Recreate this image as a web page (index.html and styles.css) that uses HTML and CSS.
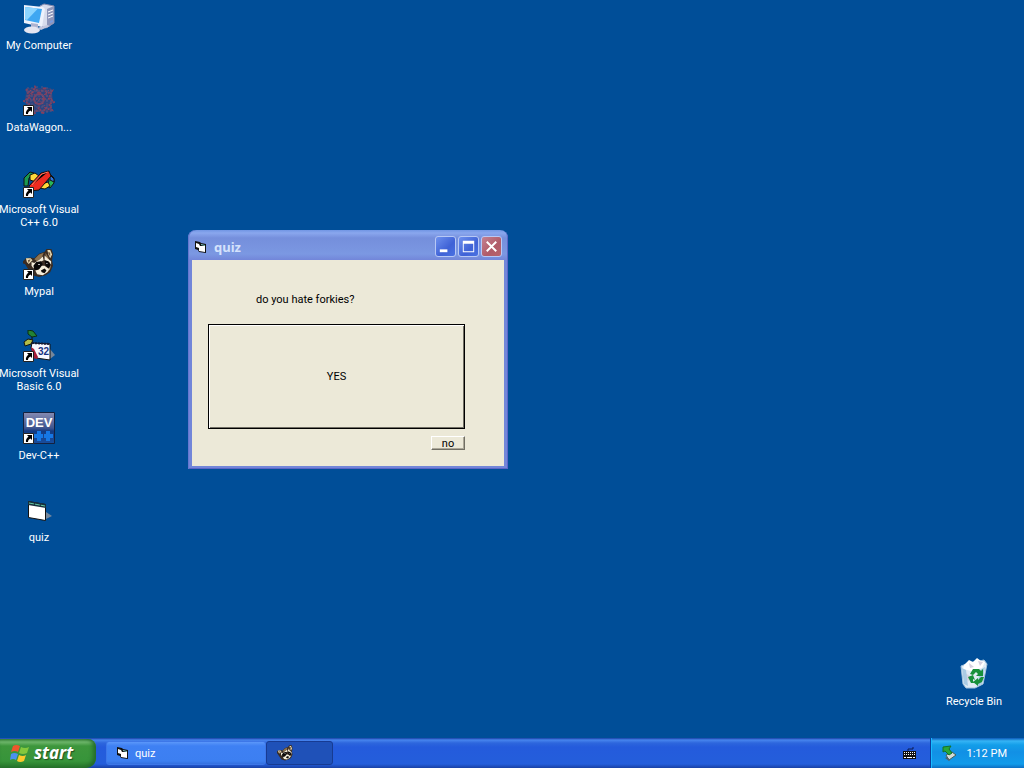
FILE: index.html
```html
<!DOCTYPE html>
<html lang="en">
<head>
    <meta charset="UTF-8">
    <meta name="viewport" content="width=device-width, initial-scale=1.0">
    <title>Desktop</title>
    <link rel="stylesheet" href="styles.css">
</head>
<body>
    <!-- Shapes used more than once -->
    <svg class="defs" width="0" height="0" aria-hidden="true">
        <symbol id="shortcut" viewBox="0 0 11 11">
            <path fill="#fff" stroke="#222" d="M.5 .5h10v10H.5z"/>
            <path fill="#000" d="M4 2h5v5L7.500 5.500C5.500 6.500 5 7.500 5 9H3C2.500 7 3.500 5 5.500 3.700z"/>
        </symbol>
        <symbol id="form" viewBox="0 0 16 16">
            <path fill="#111" d="M2 2l5 1 1 1 5 1v9l-7-1-1-2-3-1z"/>
            <path fill="#fff" d="M3 4l3 1 1 2h5v6l-6-1V9L3 8z"/>
            <path fill="#7fc6c0" d="M8 5l4 1v1L8 6z"/>
        </symbol>
        <symbol id="raccoon" viewBox="0 0 32 30">
            <path fill="#3a2c22" d="M2 10l5-1 4 1 5-5 6-2 2-3 5-1 2 6-1 7 1 6-3 7-5 3-7 2-7-2-5-7-3-5-4-1z"/>
            <path fill="#eadbb4" d="M2 10l5 0 2 2-4 4-2-2zM25 1l3 0 2 5-2 4-2-4z"/>
            <path fill="#6e573f" d="M4 12l3-1-2 4zM26 3l2 1v4l-2-3z"/>
            <path fill="#8e7350" d="M11 11l5-5 5-2-2 5-5 4zM23 4l3 5 1 4-4-3z"/>
            <path fill="#f6eedb" d="M8 14l3 1 6-4 3-3 1 4-4 2-5 3-2 4-2-3zM22 7l3 3 4 3 0 4-2-3-5-2z"/>
            <path fill="#0b0808" d="M10 18l3-4 5-1 2 3-2 5-4 2-3-1zM22 12l4 1 2 4-1 4-4-3z"/>
            <path fill="#f6eedb" d="M12 23l4-1 3-4 3 0 4 3 2 0-3 4-5 3-6-1z"/>
            <path fill="#0b0808" d="M18 23l4-2 2 2-2 3-3-1z"/>
            <path fill="#fff" d="M15 16h2v1h-2zM24 15h1v1h-1z"/>
            <path fill="#b6a17e" d="M29 17l-1 4-2 3 1-4z"/>
        </symbol>
    </svg>

    <main class="desktop">
        <nav class="icons">
            <a href="#" class="icon">
                <svg class="picture" viewBox="0 0 32 32">
                    <path fill="#d8dcec" stroke="#8389ad" d="M17 4l4-2 10 2v17l-8 5-6-2z"/>
                    <path fill="#8e96ba" d="M24 7l7-3v17l-7 5z"/>
                    <path stroke="#fff" d="M25 10l5-2M25 13l5-2M25 16l5-2"/>
                    <path fill="#7b9ce0" d="M27 19l3-1v2l-3 1z"/>
                    <path fill="#eef2fc" d="M1 3l19 2 2 2-3 18L1 21z"/>
                    <path fill="#3fa7f2" d="M2 5l17 2-3 14L2 18z"/>
                    <path fill="#8bd4ff" d="M2 5l13 1.500L4 18l-2-.5z"/>
                    <path fill="#aeb3d0" d="M8 21l7 1v4l-7-1z"/>
                    <ellipse cx="9" cy="28" rx="8" ry="3.500" fill="#e4e5f1"/>
                    <path fill="#c3c6dd" d="M14 26l10-3 3 1-9 4z"/>
                </svg>
                <span>My Computer</span>
            </a>
            <a href="#" class="icon">
                <svg class="picture" viewBox="0 0 32 32">
                    <path fill="#573e68" fill-opacity=".5" d="M4 4h24l2 10-2 14H5L2 14z"/>
                    <g fill="none" stroke="#83405f" stroke-width="2">
                        <circle cx="16" cy="15" r="5"/>
                        <path stroke-dasharray="2 1" d="M3 5l6 5 3-7 4 7 6-7 1 7 6-3-3 7 5 4-5 2 3 6-7-2-2 6-4-6-5 6-1-6-6 3 2-7-5-3 6-4z"/>
                    </g>
                    <path fill="none" stroke="#58537e" stroke-dasharray="2 2" d="M5 3v26M9 3v26M14 2v28M19 2v28M24 3v26M28 5v23M3 7h27M3 12h27M3 17h27M3 22h27M3 27h26"/>
                    <path stroke="#a34559" stroke-dasharray="1 2" d="M7 6l19 20M26 6L7 25M4 15h25"/>
                    <use href="#shortcut" y="21" width="11" height="11"/>
                </svg>
                <span>DataWagon...</span>
            </a>
            <a href="#" class="icon">
                <svg class="picture" viewBox="0 0 32 32">
                    <g stroke="#111">
                        <path fill="#1a9850" d="M1 12l6-6 4 1-5 5-1 8H1z"/>
                        <path fill="#ffd83a" d="M7 9l5-2 4 3-3 6-6-2z"/>
                        <path fill="#28b55a" d="M25 6l6 6v5l-4 5-3-2 2-5z"/>
                        <path fill="#2c73dc" d="M27 9l4 4v3l-4-2z"/>
                        <path fill="#ffd83a" d="M19 18l6-2 2 4-5 3-6-1z"/>
                        <path fill="#ee2b20" d="M6 20L18 7l8-2 2 5-12 14-9 1z"/>
                    </g>
                    <path stroke="#ff795e" d="M9 19L19 8l6-2"/>
                    <use href="#shortcut" y="21" width="11" height="11"/>
                </svg>
                <span>Microsoft Visual<br>C++ 6.0</span>
            </a>
            <a href="#" class="icon">
                <svg class="picture" viewBox="0 0 32 32">
                    <use href="#raccoon" y="1" width="32" height="28"/>
                    <use href="#shortcut" y="21" width="11" height="11"/>
                </svg>
                <span>Mypal</span>
            </a>
            <a href="#" class="icon">
                <svg class="picture" viewBox="0 0 32 32">
                    <path fill="#76879b" d="M27 19l5 6-5 4z"/>
                    <path fill="#228235" stroke="#0c2c11" d="M5 0l5 1 4 5-5 1-4-3z"/>
                    <path fill="none" stroke="#111" d="M9 7v8"/>
                    <path fill="#b4bd48" stroke="#15160d" d="M1 12l4-3 5 1-2 4-6 2z"/>
                    <path fill="#f8f8ff" stroke="#111" d="M9 13l18 1v16l-14-2-5-10z"/>
                    <path fill="#a61d37" d="M8 17l3 2 4 8-1 2-4-1z"/>
                    <path stroke="#141c39" stroke-dasharray="2 1" stroke-width="2" d="M9 13l18 1"/>
                    <text class="art-32" x="15" y="25">32</text>
                    <use href="#shortcut" y="21" width="11" height="11"/>
                </svg>
                <span>Microsoft Visual<br>Basic 6.0</span>
            </a>
            <a href="#" class="icon">
                <svg class="picture" viewBox="0 0 32 32">
                    <defs>
                        <linearGradient id="dev" x2="0" y2="1">
                            <stop offset="0" stop-color="#858bb2"/>
                            <stop offset=".5" stop-color="#40558f"/>
                            <stop offset=".6" stop-color="#123a82"/>
                            <stop offset="1" stop-color="#184e9f"/>
                        </linearGradient>
                    </defs>
                    <path fill="url(#dev)" stroke="#14213f" d="M.5 .5h31v31H.5z"/>
                    <text class="art-dev" x="16" y="15" text-anchor="middle">DEV</text>
                    <path stroke="#1677e4" stroke-width="4" d="M11 24h9M16 19v10M21 24h9M25 19v10"/>
                    <use href="#shortcut" y="21" width="11" height="11"/>
                </svg>
                <span>Dev-C++</span>
            </a>
            <a href="#" class="icon">
                <svg class="picture" viewBox="0 0 32 32">
                    <path fill="#72869c" d="M23 18l6 4-6 3z"/>
                    <path fill="#fff" stroke="#111" d="M5.500 7.500l17 3v16l-17-3z"/>
                    <path fill="#17303e" d="M5 7l18 3v4L5 11z"/>
                    <path stroke="#63c9a4" stroke-dasharray="5 1" d="M6 9l16 3"/>
                </svg>
                <span>quiz</span>
            </a>
        </nav>

        <a href="#" class="icon recycle">
            <svg class="picture" viewBox="0 0 32 32">
                <path fill="#dfebf5" stroke="#a3c2dd" d="M3 8l8-3 15-3 3 4-4 20-8 4H8L5 26z"/>
                <path fill="#fff" d="M6 7l5-5 4 2 4-4 4 3 4 1-3 6-11 3-8-2z"/>
                <path fill="#d5d1e0" d="M11 5l5 4-4 1zM20 3l2 5 3-4zM7 15l5 3-2 6z"/>
                <path fill="#a9cbe4" d="M4 10l4 2 2 16-4-2zM27 9l-3 17-5 3 3-17z"/>
                <path fill="#17903b" d="M12 16l3-5h6l2 2 2-2v7h-7l2-2-2-2-3 3zM26 19l-2 5-4 2v2l-5-4 5-4v2l3-3zM10 19l5-2 2 5-2-1v2l1 2h-3l-2-4z"/>
            </svg>
            <span>Recycle Bin</span>
        </a>

        <section class="window" aria-label="quiz">
            <header class="titlebar">
                <svg class="small-icon" viewBox="0 0 16 16"><use href="#form"/></svg>
                <h1>quiz</h1>
                <button class="caption" aria-label="Minimize">
                    <svg viewBox="0 0 20 20"><path fill="#fff" d="M4 13h8v3H4z"/></svg>
                </button>
                <button class="caption" aria-label="Maximize">
                    <svg viewBox="0 0 20 20"><path fill="#fff" fill-rule="evenodd" d="M4 4h12v12H4zM5 7v8h10V7z"/></svg>
                </button>
                <button class="caption close" aria-label="Close">
                    <svg viewBox="0 0 20 20"><path stroke="#fff" stroke-width="2" d="M5 5l10 10M15 5L5 15"/></svg>
                </button>
            </header>
            <form class="form">
                <p>do you hate forkies?</p>
                <button type="button" class="yes">YES</button>
                <button type="button" class="no">no</button>
            </form>
        </section>
    </main>

    <footer class="taskbar">
        <button class="start">
            <svg viewBox="0 0 20 20">
                <path fill="#ef562c" d="M3 3q3-2 7 0L8 9q-3-2-7 0z"/>
                <path fill="#83c73d" d="M11 4q4 2 8 0l-2 6q-4 2-8 0z"/>
                <path fill="#4c91f0" d="M1 11q3-2 7 0l-2 6q-3-2-6 0z"/>
                <path fill="#fbc92c" d="M9 12q4 2 7 0l-2 6q-4 2-7 0z"/>
            </svg>
            start
        </button>
        <button class="task">
            <svg class="small-icon" viewBox="0 0 16 16"><use href="#form"/></svg>
            quiz
        </button>
        <button class="task active" aria-label="Mypal">
            <svg class="small-icon" viewBox="0 0 16 16"><use href="#raccoon" width="16" height="16"/></svg>
        </button>
        <svg class="small-icon keyboard" viewBox="0 0 16 16">
            <path fill="none" stroke="#0b1c52" d="M7 6V4h5V2"/>
            <path fill="#111" d="M2 6h13v8H2z"/>
            <path stroke="#fff" stroke-dasharray="1 1" d="M3 7.500h11M3 9.500h11"/>
            <path stroke="#fff" d="M3 12.500h2M6 12.500h5M12 12.500h2"/>
        </svg>
        <div class="tray">
            <svg class="small-icon" viewBox="0 0 16 16">
                <path fill="#d5dbd9" stroke="#45605c" d="M5 10l6-3 4 3-7 5z"/>
                <path fill="#51636c" d="M6 12l3 3-1 1-4-3z"/>
                <path fill="#27a83a" stroke="#167126" d="M2 2l8-1-2 3 3 4-3 2-4-4-2 1z"/>
            </svg>
            <time datetime="13:12">1:12 PM</time>
        </div>
    </footer>
</body>
</html>
```
FILE: styles.css
```css
* {
    box-sizing: border-box;
}
body {
    display: flex;
    flex-direction: column;
    min-height: 100vh;
    margin: 0;
    background: #004e98;
    color: white;
    font: 11px/13px Tahoma, Roboto, sans-serif;
}
button {
    margin: 0;
    padding: 0;
    font: inherit;
}
.defs {
    position: absolute;
}

/* Desktop */
.desktop {
    position: relative;
    flex: 1;
}
.icons {
    display: grid;
    grid-auto-rows: 82px;
    width: 78px;
    padding-top: 2px;
}
.icon {
    display: flex;
    flex-direction: column;
    align-items: center;
    gap: 5px;
    width: 78px;
    color: white;
    text-align: center;
    text-decoration: none;
    white-space: nowrap;
}
.picture {
    width: 32px;
    height: 32px;
    flex: none;
}
.recycle {
    position: absolute;
    right: 11px;
    bottom: 30px;
}
.art-32 {
    fill: #173180;
    font: bold 10px "Liberation Sans", sans-serif;
}
.art-dev {
    fill: white;
    font: bold 13px "Liberation Sans", sans-serif;
}
.small-icon {
    width: 16px;
    height: 16px;
    flex: none;
}

/* Quiz window */
.window {
    position: absolute;
    left: 188px;
    top: 230px;
    width: 320px;
    padding: 0 4px 3px;
    border-radius: 8px 8px 0 0;
    background: linear-gradient(#7196e4, #8aa7ee 3px, #758fdc 8px, #7b98e2 24px, #7286d9 30px);
    box-shadow: inset 1px 0 #6577d0, inset -1px -1px #5c66c8;
}
.titlebar {
    display: flex;
    align-items: center;
    gap: 2px;
    height: 30px;
    padding: 3px 2px 0 1px;
}
.titlebar h1 {
    flex: 1;
    margin: 0 0 0 3px;
    color: #d4e2fc;
    font: bold 13px/16px "Trebuchet MS", "Noto Sans", sans-serif;
}
.caption {
    width: 21px;
    height: 21px;
    border: 1px solid #b7c8f5;
    border-radius: 3px;
    background: linear-gradient(135deg, #6e91ee, #3f62d6 60%, #4a72e2);
}
.caption svg {
    display: block;
    width: 19px;
    height: 19px;
}
.close {
    background: linear-gradient(135deg, #c48191, #b05b68 60%, #b9636c);
}
.form {
    display: flex;
    flex-direction: column;
    height: 206px;
    padding: 33px 39px 16px 16px;
    background: #ece9d8;
    color: black;
    font: 11px/13px "MS Sans Serif", Roboto, sans-serif;
}
.form p {
    margin: 0 0 18px 48px;
}
.yes {
    flex: 1;
    border: 1px solid black;
    background: #ece9d8;
    box-shadow: inset 1px 1px #fff, inset -1px -1px #716f64;
}
.no {
    align-self: flex-end;
    width: 34px;
    height: 14px;
    margin-top: 7px;
    border: 1px solid;
    border-color: #fff #716f64 #716f64 #fff;
    background: #ece9d8;
    box-shadow: inset -1px -1px #aca899;
}

/* Taskbar */
.taskbar {
    display: flex;
    align-items: center;
    height: 30px;
    background: linear-gradient(#1941a5, #4785ee 2px, #2d66dd 5px, #245bdc 9px, #245edb 26px, #1941a5);
}
.start {
    display: flex;
    align-items: center;
    gap: 4px;
    width: 96px;
    height: 29px;
    margin-right: 10px;
    padding: 0 0 0 10px;
    border: 0;
    border-radius: 0 8px 10px 0;
    background: linear-gradient(#3c873c, #6eb66b 3px, #3d963c 7px, #37943a 22px, #287a2b);
    box-shadow: inset -3px -1px 4px #246b2b;
    color: white;
    font: italic bold 17px/20px "Trebuchet MS", "Noto Sans", sans-serif;
    text-shadow: 1px 1px 1px #1f4f20;
}
.start svg {
    width: 20px;
    height: 20px;
    flex: none;
}
.task {
    display: flex;
    align-items: center;
    gap: 4px;
    width: 160px;
    height: 24px;
    padding: 0 8px;
    border: 1px solid #3d77e8;
    border-radius: 3px;
    background: linear-gradient(#5b97fa, #3e80f3 4px, #3c7ff1 19px, #3470df);
    color: white;
}
.active {
    width: 67px;
    padding-left: 10px;
    border-color: #173b92;
    background: #1f51b8;
}
.keyboard {
    margin: 0 13px 0 auto;
}
.tray {
    display: flex;
    align-items: center;
    gap: 10px;
    height: 30px;
    padding: 0 17px 0 10px;
    border-left: 1px solid #0b3d9d;
    background: linear-gradient(#0c59b9, #35b4f5 3px, #139ee9 7px, #1290e5 14px, #119bea 26px, #0d6dc2);
    box-shadow: inset 1px 0 #18bbff;
}
```
